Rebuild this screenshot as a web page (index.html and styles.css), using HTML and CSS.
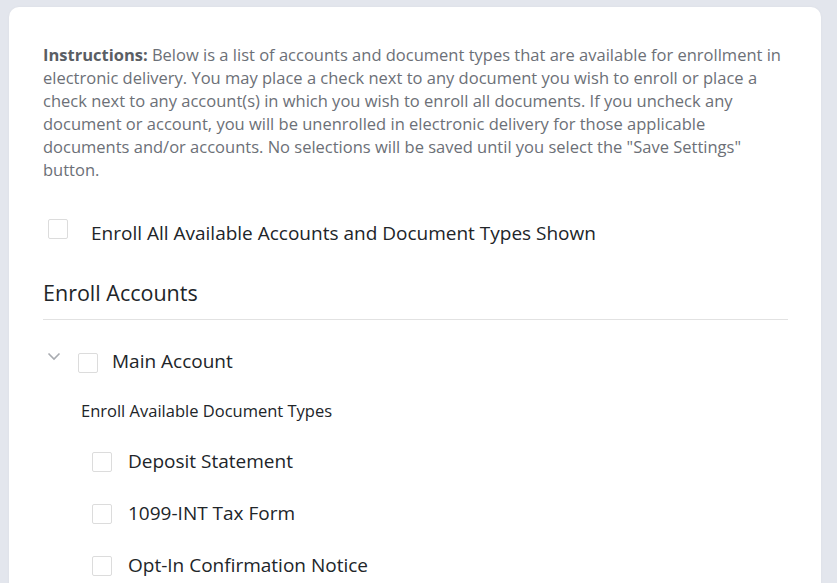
FILE: index.html
```html
<!DOCTYPE html>
<html>
<head>
<meta charset="utf-8">
<link rel="stylesheet" href="styles.css">
</head>
<body>
<div class="card">
  <p class="instructions"><strong>Instructions:</strong> Below is a list of accounts and document types that are available for enrollment in electronic delivery. You may place a check next to any document you wish to enroll or place a check next to any account(s) in which you wish to enroll all documents. If you uncheck any document or account, you will be unenrolled in electronic delivery for those applicable documents and/or accounts. No selections will be saved until you select the "Save Settings" button.</p>

  <label class="enroll-all">
    <span class="box"></span>
    <span>Enroll All Available Accounts and Document Types Shown</span>
  </label>

  <h2 class="section-title">Enroll Accounts</h2>

  <div class="account">
    <div class="account-row">
      <svg class="chevron" width="14" height="9" viewBox="0 0 14 9"><path d="M1.5 1.5 L7 7 L12.5 1.5" fill="none" stroke="#a8abb0" stroke-width="1.6"/></svg>
      <span class="box"></span>
      <span class="account-name">Main Account</span>
    </div>
    <div class="doc-types-label">Enroll Available Document Types</div>
    <ul class="doc-list">
      <li class="doc"><span class="box"></span><span>Deposit Statement</span></li>
      <li class="doc"><span class="box"></span><span>1099-INT Tax Form</span></li>
      <li class="doc"><span class="box"></span><span>Opt-In Confirmation Notice</span></li>
    </ul>
  </div>
</div>
</body>
</html>
```
FILE: styles.css
```css
html, body {
  margin: 0;
  padding: 0;
}
body {
  background: #e3e6ed;
  font-family: "Open Sans", "Noto Sans", sans-serif;
  color: #212529;
  overflow: hidden;
  height: 583px;
}
.card {
  background: #fff;
  margin: 7px 16px 0 9px;
  border-radius: 10px 10px 0 0;
  padding: 36px 33px 40px 34px;
  min-height: 600px;
  box-shadow: 0 0 3px rgba(0,0,0,0.04);
}
.instructions {
  margin: 0;
  font-size: 16.5px;
  line-height: 23px;
  color: #6c7077;
}
.instructions strong {
  color: #5a5e64;
  font-weight: 700;
}
.box {
  display: inline-block;
  width: 18px;
  height: 18px;
  border: 1px solid #dcdcdc;
  border-radius: 2px;
  box-sizing: content-box;
  flex: none;
}
.enroll-all {
  display: flex;
  align-items: center;
  gap: 23px;
  margin: 38px 0 0 5px;
  font-size: 19px;
  line-height: 28px;
}
.enroll-all .box {
  margin-top: -8px;
}
.section-title {
  margin: 31px 0 0;
  font-weight: 400;
  font-size: 21.5px;
  line-height: 30px;
  padding-bottom: 11px;
  border-bottom: 1px solid #e2e2e2;
}
.account {
  margin-top: 27px;
}
.account-row {
  display: flex;
  align-items: center;
  font-size: 19px;
  line-height: 28px;
}
.chevron {
  margin: -10px 0 0 4px;
}
.account-row .box {
  margin: 4px 0 0 17px;
}
.account-name {
  margin-left: 14px;
}
.doc-types-label {
  margin: 25px 0 0 38px;
  font-size: 16.5px;
  line-height: 22px;
}
.doc-list {
  list-style: none;
  margin: 25px 0 0 49px;
  padding: 0;
}
.doc {
  display: flex;
  align-items: center;
  gap: 16px;
  font-size: 19px;
  line-height: 28px;
  margin-bottom: 24px;
}
.doc .box {
  margin-top: 2px;
}
```
